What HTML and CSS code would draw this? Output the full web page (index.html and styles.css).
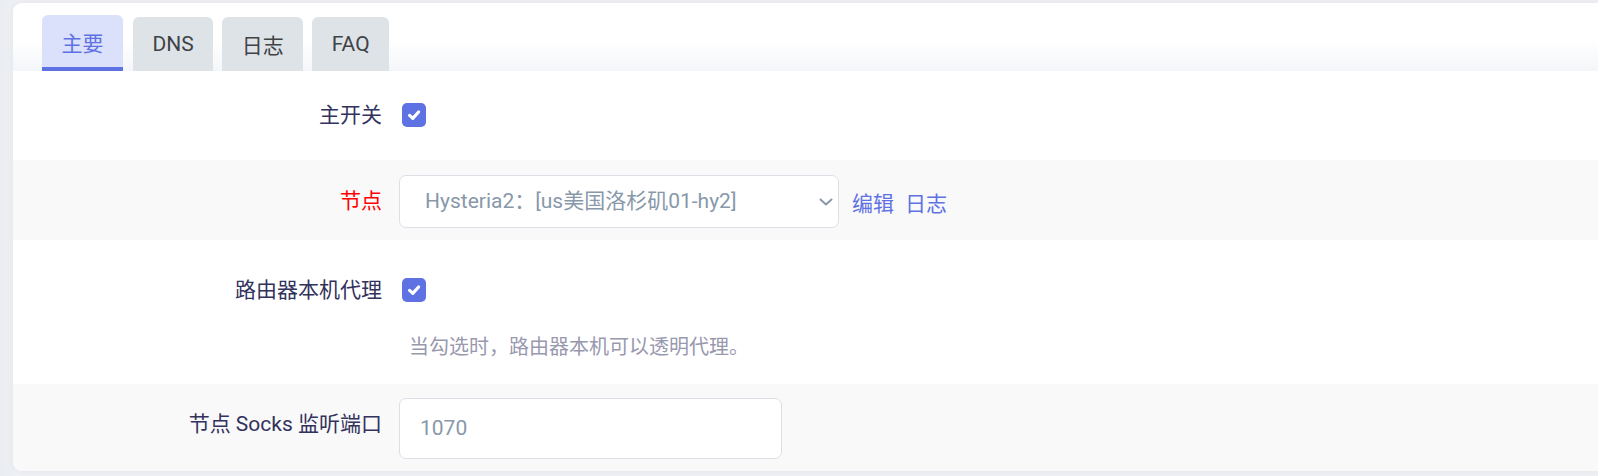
FILE: index.html
```html
<!DOCTYPE html>
<html lang="zh-CN">
<head>
<meta charset="utf-8">
<title>Passwall</title>
<link rel="stylesheet" href="styles.css">
</head>
<body>
<div class="card">
  <div class="tabbar">
    <ul class="tabs">
      <li class="tab active">主要</li>
      <li class="tab">DNS</li>
      <li class="tab">日志</li>
      <li class="tab">FAQ</li>
    </ul>
  </div>
  <div class="panel">
    <div class="row row-switch">
      <div class="label">主开关</div>
      <div class="field">
        <span class="checkbox"><svg viewBox="0 0 24 24" width="24" height="24"><path d="M7.6 12.4 L10.8 15.4 L16.6 9" fill="none" stroke="#fff" stroke-width="3.2" stroke-linecap="round" stroke-linejoin="round"/></svg></span>
      </div>
    </div>
    <div class="row row-node alt">
      <div class="label required">节点</div>
      <div class="field">
        <div class="select-wrap">
          <div class="select">Hysteria2：[us美国洛杉矶01-hy2]</div>
          <svg class="chev" viewBox="0 0 14 8" width="14" height="8"><path d="M1.5 1.5 L7 6.5 L12.5 1.5" fill="none" stroke="#8898aa" stroke-width="2" stroke-linecap="round" stroke-linejoin="round"/></svg>
        </div>
        <a class="link">编辑</a>
        <a class="link">日志</a>
      </div>
    </div>
    <div class="row row-proxy">
      <div class="label">路由器本机代理</div>
      <div class="field col">
        <span class="checkbox"><svg viewBox="0 0 24 24" width="24" height="24"><path d="M7.6 12.4 L10.8 15.4 L16.6 9" fill="none" stroke="#fff" stroke-width="3.2" stroke-linecap="round" stroke-linejoin="round"/></svg></span>
        <div class="desc">当勾选时，路由器本机可以透明代理。</div>
      </div>
    </div>
    <div class="row row-port alt">
      <div class="label">节点 Socks 监听端口</div>
      <div class="field">
        <div class="input">1070</div>
      </div>
    </div>
  </div>
</div>
</body>
</html>
```
FILE: styles.css
```css
html, body {
  margin: 0;
  padding: 0;
}
body {
  background: linear-gradient(to right, #e9ecf0 0, #eef0f4 13px, #eef0f4 100%);
  font-family: "Roboto", "Noto Sans CJK SC", sans-serif;
  font-size: 21px;
  color: #32325d;
  height: 476px;
  overflow: hidden;
  padding: 3px 0 0 13px;
  box-sizing: border-box;
}
.card {
  background: #fff;
  border-radius: 9px 0 0 9px;
  box-shadow: 0 0 6px rgba(50, 50, 93, 0.06);
  overflow: hidden;
  height: 468px;
}
.tabbar {
  height: 68px;
  padding-left: 29px;
  box-sizing: border-box;
  background: linear-gradient(to bottom, #ffffff 0, #ffffff 55%, #f4f6f9 100%);
  display: flex;
  align-items: flex-end;
}
.tabs {
  list-style: none;
  margin: 0;
  padding: 0;
  display: flex;
  align-items: flex-end;
  gap: 9px;
}
.tab {
  height: 54px;
  padding: 0 19.5px;
  display: flex;
  align-items: center;
  justify-content: center;
  background: #dee3e8;
  color: #404346;
  border-radius: 6px 6px 0 0;
  font-size: 21px;
  box-sizing: border-box;
}
.tab.active {
  height: 56px;
  background: #dbe0fb;
  color: #5e72e4;
  border-bottom: 4px solid #5e72e4;
  padding-top: 1px;
  margin-right: 1px;
}
.panel {
  background: #fff;
  border-radius: 7px 0 0 0;
}
.row {
  display: flex;
  align-items: flex-start;
  box-sizing: border-box;
}
.row.alt {
  background: #f9f9f9;
}
.label {
  width: 369px;
  text-align: right;
  flex: none;
  line-height: 24px;
}
.label.required {
  color: #ff0000;
}
.field {
  margin-left: 17px;
  display: flex;
  align-items: center;
}
.field.col {
  flex-direction: column;
  align-items: flex-start;
}
.row-switch {
  height: 89px;
  padding-top: 32px;
}
.row-node {
  height: 80px;
  padding-top: 15px;
}
.row-node .label {
  line-height: 53px;
}
.row-proxy {
  height: 144px;
  padding-top: 38px;
}
.row-port {
  height: 87px;
  padding-top: 14px;
}
.row-port .label {
  line-height: 61px;
  margin-top: -4px;
}
.checkbox {
  width: 24px;
  height: 24px;
  margin-left: 3px;
  border-radius: 5px;
  background: #5e72e4;
  display: block;
}
.checkbox svg {
  display: block;
}
.select-wrap {
  position: relative;
}
.select {
  width: 440px;
  height: 53px;
  box-sizing: border-box;
  border: 1px solid #dcdfe6;
  border-radius: 7px;
  background: #fff;
  color: #8898aa;
  padding-left: 25px;
  line-height: 51px;
  white-space: nowrap;
}
.chev {
  position: absolute;
  right: 6px;
  top: 23px;
}
.link {
  color: #5e72e4;
  margin-left: 13px;
  cursor: pointer;
}
.link + .link {
  margin-left: 11px;
}
.desc {
  margin-top: 31px;
  margin-left: 10px;
  font-size: 20px;
  color: #9898ae;
  line-height: 28px;
}
.input {
  width: 383px;
  height: 61px;
  box-sizing: border-box;
  border: 1px solid #dcdfe6;
  border-radius: 7px;
  background: #fff;
  color: #8898aa;
  padding-left: 20px;
  line-height: 59px;
}
```
